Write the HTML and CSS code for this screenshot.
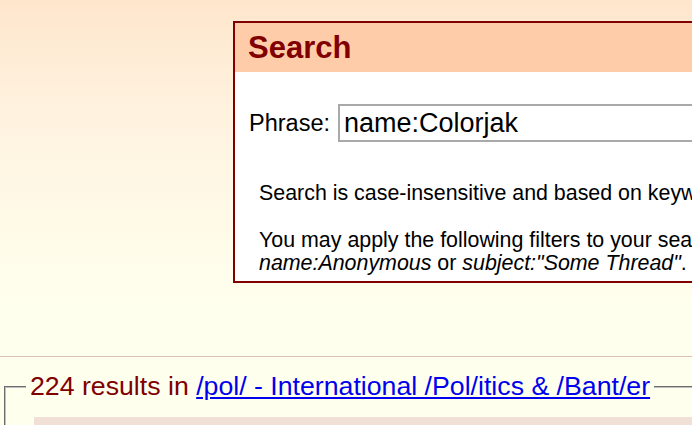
FILE: index.html
```html
<!DOCTYPE html>
<html>
<head>
<meta charset="utf-8">
<title>Search</title>
<link rel="stylesheet" href="styles.css">
</head>
<body>
<div class="page">
  <div class="search-box">
    <h2 class="search-head">Search</h2>
    <div class="search-body">
      <form class="phrase-row">
        <label class="phrase-label" for="q">Phrase:</label>
        <input class="phrase-input" id="q" type="text" value="name:Colorjak">
      </form>
      <p class="note">Search is case-insensitive and based on keywords. To match exact phrases, use "quotes". Use an asterisk (*) for wildcard.</p>
      <p class="note">You may apply the following filters to your searches: <em>id</em>, <em>thread</em>, <em>subject</em>, and <em>name</em>. To apply a filter, simply add to your query, for example,<br><em>name:Anonymous</em> or <em>subject:"Some Thread"</em>. Wildcards cannot be used in filters.</p>
    </div>
  </div>
  <hr class="divider">
  <fieldset class="results">
    <legend class="results-legend">224 results in <a class="board-link" href="#">/pol/ - International /Pol/itics &amp; /Bant/er</a></legend>
    <div class="post"></div>
  </fieldset>
</div>
</body>
</html>
```
FILE: styles.css
```css
html, body {
  margin: 0;
  padding: 0;
  overflow: hidden;
}
body {
  width: 692px;
  height: 425px;
  background-color: #ffffee;
  background-image: linear-gradient(to bottom, #fee6cc 0px, #fff3e0 120px, #ffffee 300px);
  font-family: "Liberation Sans", Arial, sans-serif;
  color: #000;
}
.page {
  padding-top: 21px;
  width: 692px;
  overflow: hidden;
}
.search-box {
  margin-left: 233px;
  width: 1400px;
  border: 2px solid #800000;
  background: #ffffff;
}
.search-head {
  margin: 0;
  padding: 7px 13px;
  background: #ffccaa;
  color: #800000;
  font-size: 31px;
  line-height: 35px;
  font-weight: bold;
}
.search-body {
  padding: 32px 0 6px 14px;
}
.phrase-row {
  display: flex;
  align-items: center;
  gap: 8px;
  margin: 0;
}
.phrase-label {
  font-size: 23.5px;
}
.phrase-input {
  width: 420px;
  height: 38px;
  box-sizing: border-box;
  border: 2px solid #a9a9a9;
  padding: 0 4px;
  font-family: "Liberation Sans", Arial, sans-serif;
  font-size: 27px;
  color: #000;
  background: #fff;
  outline: none;
}
.note {
  margin: 40px 0 0 10px;
  font-size: 21.4px;
  line-height: 23px;
  white-space: nowrap;
}
.note + .note {
  margin-top: 24px;
}
.divider {
  margin: 73px 0 0 0;
  border: none;
  border-top: 1px solid #d9bfb7;
  height: 0;
}
.results {
  margin: 14px 0 0 4px;
  padding: 0 0 0 20px;
  border: 2px groove #c0c0c0;
  border-right: none;
  border-bottom: none;
}
.results-legend {
  padding: 0 4px;
  font-size: 26.7px;
  line-height: 31px;
  color: #800000;
  white-space: nowrap;
}
.board-link {
  color: #0000ee;
  text-decoration: underline;
}
.post {
  margin: 15px 0 0 8px;
  height: 120px;
  background: #f0e0d6;
}
```
